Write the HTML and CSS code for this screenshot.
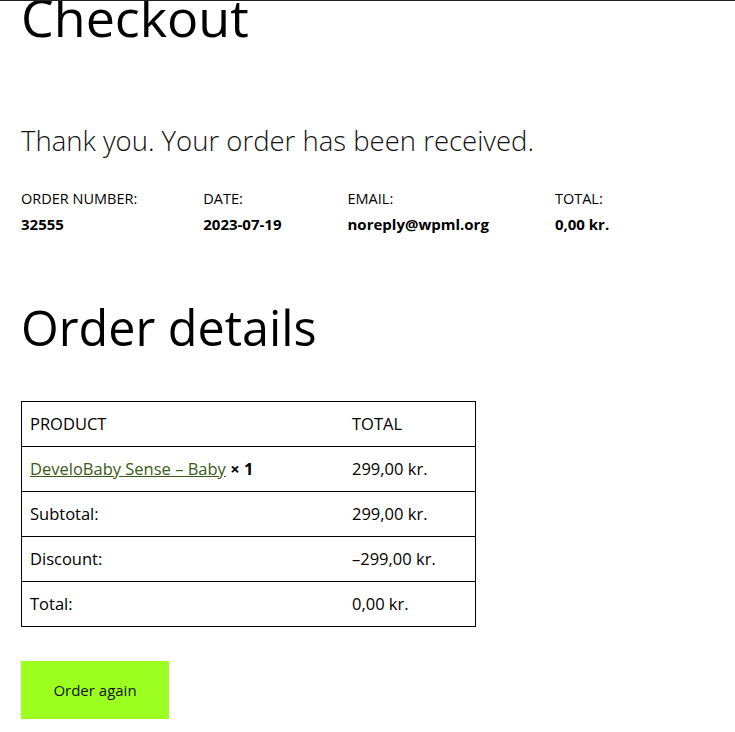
FILE: index.html
```html
<!DOCTYPE html>
<html lang="en">
<head>
    <meta charset="UTF-8">
    <meta name="viewport" content="width=device-width, initial-scale=1.0">
    <link rel="stylesheet" href="styles.css">
    <title>Checkout</title>
</head>
<body>
    <div class="page">
        <h1 class="page-title">Checkout</h1>

        <p class="thankyou">Thank you. Your order has been received.</p>

        <ul class="order-overview">
            <li>Order number:<strong>32555</strong></li>
            <li>Date:<strong>2023-07-19</strong></li>
            <li>Email:<strong>noreply@wpml.org</strong></li>
            <li>Total:<strong>0,00 kr.</strong></li>
        </ul>

        <h2 class="section-title">Order details</h2>

        <table class="order-table">
            <thead>
                <tr>
                    <th class="col-product">Product</th>
                    <th class="col-total">Total</th>
                </tr>
            </thead>
            <tbody>
                <tr>
                    <td><a href="#">DeveloBaby Sense – Baby</a> <strong class="qty">× 1</strong></td>
                    <td>299,00 kr.</td>
                </tr>
            </tbody>
            <tfoot>
                <tr>
                    <td>Subtotal:</td>
                    <td>299,00 kr.</td>
                </tr>
                <tr>
                    <td>Discount:</td>
                    <td>–299,00 kr.</td>
                </tr>
                <tr>
                    <td>Total:</td>
                    <td>0,00 kr.</td>
                </tr>
            </tfoot>
        </table>

        <a href="#" class="button">Order again</a>
    </div>
</body>
</html>
```

FILE: styles.css
```css
body {
    font-family: "Open Sans", "Noto Sans", sans-serif;
    color: #000;
    background-color: #fff;
    margin: 0;
    padding: 0;
    border-top: 1px solid #222;
    overflow: hidden;
}

.page {
    padding: 0 21px;
}

.page-title {
    font-size: 52px;
    font-weight: 400;
    line-height: 1;
    margin: -10px 0 0;
}

.thankyou {
    font-size: 27.5px;
    font-weight: 300;
    color: #111;
    margin: 79px 0 30px;
}

.order-overview {
    list-style: none;
    margin: 0;
    padding: 0;
    display: flex;
    gap: 66px;
    font-size: 14.5px;
    text-transform: uppercase;
}

.order-overview li {
    display: flex;
    flex-direction: column;
    gap: 6px;
}

.order-overview strong {
    text-transform: none;
    font-size: 15px;
}

.section-title {
    font-size: 48.5px;
    font-weight: 400;
    line-height: 1;
    margin: 69px 0 49px;
}

.order-table {
    width: 455px;
    border-collapse: collapse;
    border: 1px solid #000;
    font-size: 16.5px;
}

.order-table th,
.order-table td {
    text-align: left;
    font-weight: 400;
    height: 44px;
    padding: 0 8px;
    border-top: 1px solid #000;
}

.order-table th {
    text-transform: uppercase;
}

.col-product {
    width: 306px;
}

.order-table a {
    color: #3b5a18;
}

.qty {
    font-weight: 700;
}

.button {
    display: inline-block;
    margin-top: 34px;
    background-color: #9bff1f;
    color: #111;
    text-decoration: none;
    font-size: 15px;
    width: 148px;
    line-height: 58px;
    text-align: center;
}
```
